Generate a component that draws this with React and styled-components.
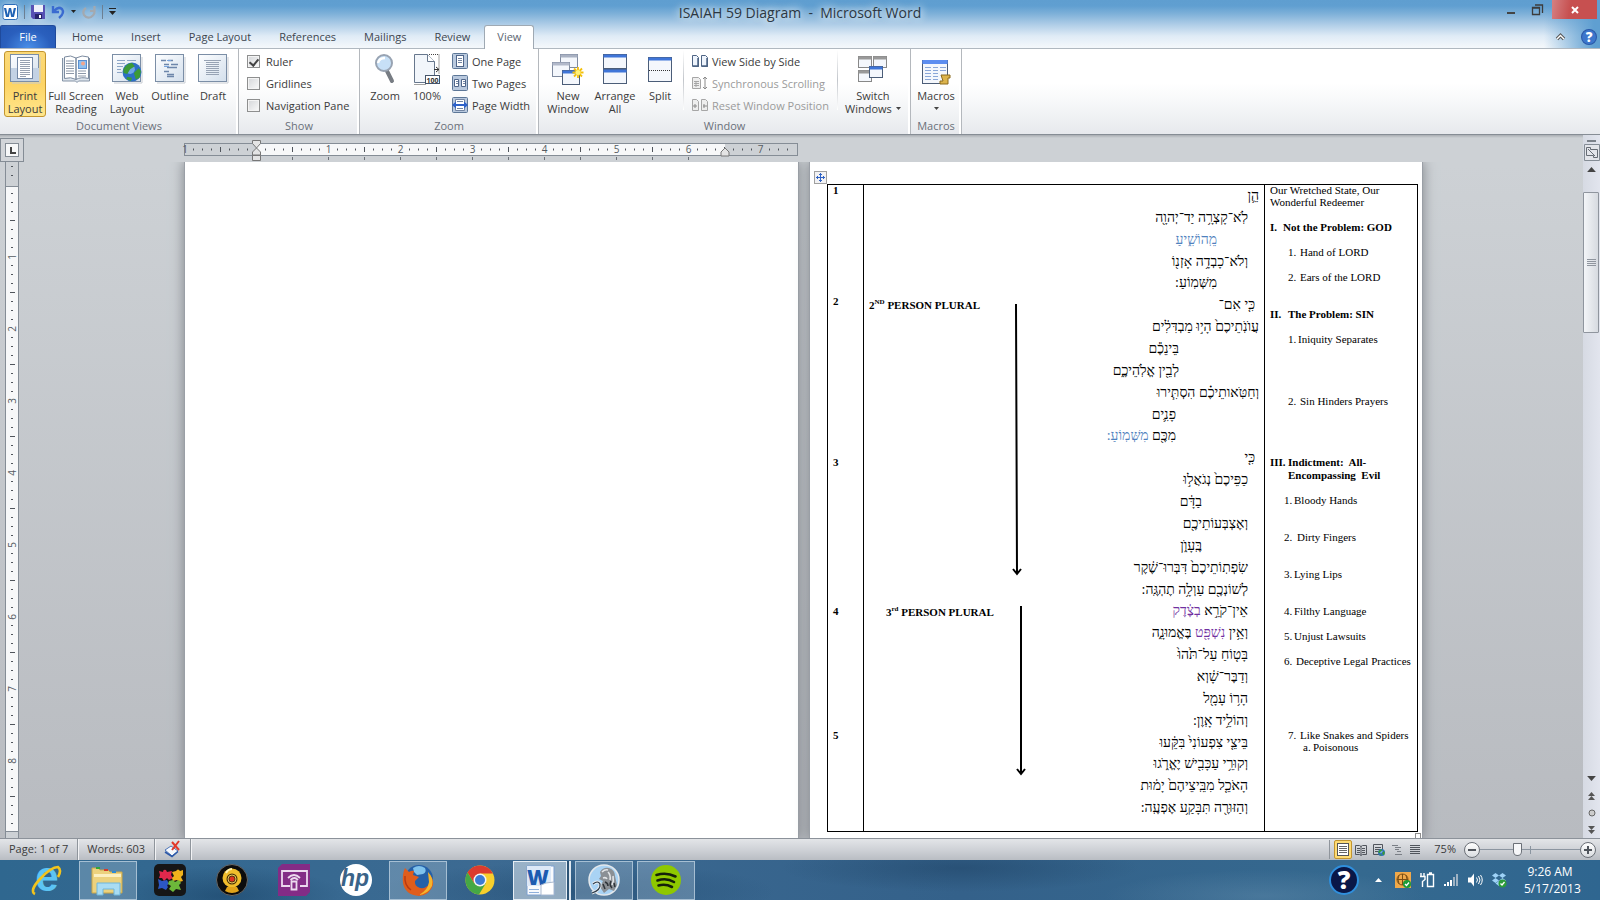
import styled, { createGlobalStyle, css } from 'styled-components';

const GlobalStyle = createGlobalStyle`
  * {
    box-sizing: border-box;
  }
  body {
    margin: 0;
    overflow: hidden;
    font-family: 'Open Sans', 'Noto Sans', sans-serif;
    font-size: 11px;
    color: #3b3b3b;
  }
  button {
    font: inherit;
    color: inherit;
    border: 0;
    padding: 0;
    background: none;
  }
  svg {
    display: block;
    flex: none;
    overflow: visible;
  }
`;

const Window = styled.div`
  height: 100vh;
  display: flex;
  flex-direction: column;
`;

/* ---------- title bar and tabs ---------- */

const Header = styled.header`
  flex: none;
  border-bottom: 1px solid #b0b8c0;
  background:
    linear-gradient(to right, transparent calc(100% - 56px), #5f9fd1 calc(100% - 6px)),
    linear-gradient(#5f9ed0 0, #609fd1 6px, #7fb1d9 14px, #b5d1e9 26px, #dfebf6 36px, #f3f7fb 47px);
`;

const TitleBar = styled.div`
  height: 25px;
  display: grid;
  grid-template-columns: 1fr auto 1fr;
`;

const QuickAccess = styled.div`
  display: flex;
  align-items: center;
  gap: 6px;
  height: 23px;
  padding-left: 2px;
  filter: drop-shadow(0 0 4px rgba(255, 255, 255, 0.6));
`;

const QuickDivider = styled.span`
  width: 1px;
  height: 14px;
  background: #6c7f92;
`;

const Title = styled.h1`
  margin: 0;
  font-size: 14px;
  font-weight: 400;
  line-height: 25px;
  white-space: pre;
  color: #2c3742;
  text-shadow: 0 0 8px #fff, 0 0 10px #e4eff8;
`;

const WindowButtons = styled.div`
  display: flex;
  justify-content: flex-end;
  align-items: flex-start;
  padding-right: 3px;
`;

const WindowButton = styled.button`
  width: ${(p) => (p.$close ? 45 : 26)}px;
  height: 19px;
  display: grid;
  place-items: center;
  ${(p) => p.$close && css`
    margin-left: 2px;
    background: linear-gradient(100deg, #d58082, #c75050 40%);
  `}
`;

const TabRow = styled.nav`
  height: 23px;
  display: flex;
  align-items: stretch;
`;

const Tab = styled.button`
  padding: 0 13px;
  line-height: 22px;
  border: 1px solid transparent;
  border-bottom: 0;
  color: #3d4650;
  ${(p) => p.$file && css`
    width: 56px;
    margin-right: 2px;
    border-color: #1f4a9c;
    border-radius: 2px 3px 0 0;
    color: #fff;
    background: radial-gradient(ellipse at bottom, #4a8fe8, #2a5fbd 60%, #2458b4);
  `}
  ${(p) => p.$active && css`
    height: 24px;
    padding: 0 12px 2px;
    border-color: #9fa9b3;
    border-radius: 3px 3px 0 0;
    color: #5b6570;
    background: #fff;
  `}
`;

const TabTools = styled.div`
  display: flex;
  align-items: center;
  gap: 16px;
  margin-left: auto;
  padding-right: 3px;
`;

/* ---------- ribbon ---------- */

const Ribbon = styled.section`
  flex: none;
  display: flex;
  border-bottom: 1px solid #868d95;
  background: linear-gradient(#fff 40%, #f8f9fa 60%, #e7e9ed);
`;

const Group = styled.div`
  width: ${(p) => p.$w}px;
  height: 85px;
  display: flex;
  flex-direction: column;
  border-right: 1px solid #b4b8bd;
  box-shadow: inset -2px 0 #fff;
`;

const GroupBody = styled.div`
  flex: 1;
  display: flex;
  padding: 1px 0 0 ${(p) => p.$pad || 4}px;
`;

const Caption = styled.div`
  height: 17px;
  line-height: 17px;
  text-align: center;
  color: #6a707a;
`;

const BigButton = styled.button`
  width: ${(p) => p.$w}px;
  height: 66px;
  margin-top: 1px;
  padding-top: 2px;
  display: grid;
  grid-template-rows: 35px;
  grid-auto-rows: 13px;
  align-content: start;
  justify-items: center;
  line-height: 13px;
  white-space: pre;
  border: 1px solid transparent;
  border-radius: 3px;
  ${(p) => p.$on && css`
    border-color: #c2952f;
    background: linear-gradient(#fbd978, #fdd465 50%, #ffe68c);
  `}
`;

const MenuLabel = styled.span`
  display: flex;
  align-items: center;
  gap: 4px;
`;

const Stack = styled.div`
  display: flex;
  flex-direction: column;
  margin-left: ${(p) => p.$gap || 0}px;
`;

const SmallButton = styled.button`
  height: 22px;
  display: flex;
  align-items: center;
  gap: 4px;
  white-space: nowrap;
  color: ${(p) => (p.disabled ? '#9b9b9b' : '#3b3b3b')};
`;

const CheckLabel = styled.label`
  height: 22px;
  display: flex;
  align-items: center;
  gap: 6px;
`;

const CheckBox = styled.input`
  appearance: none;
  width: 13px;
  height: 13px;
  margin: 0;
  display: grid;
  place-items: center;
  border: 1px solid #8e8f8f;
  background: linear-gradient(135deg, #d4d6d9, #fafafa);
  box-shadow: inset 0 0 0 1px #f4f4f4;
  &:checked::after {
    content: '';
    width: 4px;
    height: 7px;
    border: solid #444;
    border-width: 0 2px 2px 0;
    transform: rotate(40deg);
  }
`;

const Divider = styled.span`
  width: 1px;
  height: 60px;
  background: linear-gradient(#fff, #c2c6cb 50%, #fff);
`;

/* ---------- document area ---------- */

const Workspace = styled.main`
  flex: 1;
  min-height: 0;
  display: grid;
  grid-template-columns: 24px 1fr 17px;
  grid-template-rows: 27px 1fr;
  background: linear-gradient(#a9adb2, #cdd1d5 3px, #cdd1d5 30px, #b8bbc0);
`;

const TabSelector = styled.button`
  height: 24px;
  margin-top: 3px;
  display: grid;
  place-items: center;
  border: 1px solid #848c95;
  background: #d2d5d9;
`;

const RulerRow = styled.div`
  display: flex;
  justify-content: center;
`;

const Spread = styled.div`
  width: 1239px;
  flex: none;
`;

const SideRuler = styled.div`
  overflow: hidden;
  padding-left: 5px;
`;

const Canvas = styled.div`
  min-height: 0;
  display: flex;
  justify-content: center;
  gap: 12px;
  overflow: hidden;
`;

const Page = styled.article`
  position: relative;
  flex: none;
  width: ${(p) => p.$w}px;
  padding: 22px 0 0 17px;
  background: #fff;
  box-shadow: 0 0 0 1px #9a9fa6, 0 0 12px 1px #7f8489;
  font-family: 'Liberation Serif', serif;
  color: #000;
`;

const MoveHandle = styled.button`
  position: absolute;
  top: 9px;
  left: 4px;
  width: 13px;
  height: 13px;
  border: 1px solid #a0a0a0;
  background: #f2f2f4;
`;

const DocTable = styled.table`
  width: 590px;
  table-layout: fixed;
  border-collapse: collapse;
  td {
    height: 647px;
    padding: 0;
    border: 1px solid #000;
    vertical-align: top;
  }
`;

/* The outer columns sit on one single-spaced line grid. */
const LineGrid = styled.div`
  height: 644px;
  display: grid;
  grid-template-rows: repeat(52, 1fr);
  padding-left: 5px;
  line-height: 10px;
  white-space: pre;
`;

const Line = styled.div`
  grid-row: ${(p) => p.$row};
  padding-left: ${(p) => p.$indent || 0}px;
  font-weight: ${(p) => (p.$bold ? 700 : 400)};
`;

const Marker = styled.span`
  display: inline-block;
  width: ${(p) => p.$w}px;
`;

const HebrewText = styled.div`
  height: 634px;
  display: grid;
  grid-template-rows: repeat(29, 1fr);
  padding-right: 5px;
  direction: rtl;
  font-size: 14px;
  line-height: 21px;
  white-space: nowrap;
`;

const HebrewLine = styled.div`
  padding-right: ${(p) => p.$indent}px;
`;

const Ink = styled.span`
  color: ${(p) => p.$color};
`;

const FloatingLabel = styled.div`
  position: absolute;
  top: ${(p) => p.$top}px;
  left: ${(p) => p.$left}px;
  line-height: 12px;
  font-weight: 700;
  sup {
    font-size: 7px;
    line-height: 0;
  }
`;

const FloatingArrow = styled.svg`
  position: absolute;
  top: ${(p) => p.$top}px;
  left: ${(p) => p.$left}px;
`;

const EndMark = styled.span`
  position: absolute;
  top: 671px;
  right: 1px;
  width: 6px;
  height: 6px;
  border: 1px solid #8f8f8f;
`;

const ScrollBar = styled.aside`
  grid-column: 3;
  grid-row: 1 / 3;
  display: flex;
  flex-direction: column;
  align-items: stretch;
  padding-top: 5px;
  background: linear-gradient(to right, #d6dae3, #e2e5ee);
  button {
    display: grid;
    place-items: center;
    height: 17px;
  }
`;

const SplitBar = styled.span`
  width: 9px;
  height: 2px;
  margin: 0 auto 2px;
  background: #7b828a;
`;

const ScrollTrack = styled.div`
  flex: 1;
  padding-top: 14px;
`;

const ScrollThumb = styled.div`
  height: 141px;
  margin-right: 1px;
  display: grid;
  place-items: center;
  border: 1px solid #8f959e;
  border-radius: 1px;
  background: linear-gradient(to right, #f3f5f8, #d6dae0);
`;

/* ---------- status bar ---------- */

const StatusBar = styled.footer`
  flex: none;
  height: 22px;
  display: flex;
  align-items: center;
  border-top: 1px solid #8c929a;
  background: linear-gradient(#e3e5e8, #cfd2d7 50%, #b9bdc3);
`;

const StatusItem = styled.button`
  height: 21px;
  padding: 0 9px 2px;
  border-right: 1px solid #8f959c;
  box-shadow: 1px 0 #f2f3f5;
`;

const ViewButtons = styled.div`
  display: flex;
  margin-left: auto;
  padding-left: 4px;
  border-left: 1px solid #8f959c;
`;

const ViewButton = styled.button`
  width: 18px;
  height: 19px;
  display: grid;
  place-items: center;
  border: 1px solid ${(p) => (p.$on ? '#c2952f' : 'transparent')};
  border-radius: 2px;
  background: ${(p) => (p.$on ? '#fedb74' : 'none')};
`;

const ZoomValue = styled.label`
  margin: 0 8px 0 10px;
  padding-bottom: 2px;
`;

const RoundButton = styled.button`
  width: 16px;
  height: 16px;
  display: grid;
  place-items: center;
  border: 1px solid #6b7077;
  border-radius: 50%;
  background: linear-gradient(#fff, #d9dce0);
  &:last-child {
    margin-right: 4px;
  }
`;

const ZoomSlider = styled.input`
  appearance: none;
  width: 100px;
  height: 16px;
  margin: 0;
  background:
    linear-gradient(#8b95a0, #8b95a0) center / 1px 8px no-repeat,
    linear-gradient(#8b95a0, #8b95a0) center / 100% 1px no-repeat;
  &::-webkit-slider-thumb {
    appearance: none;
    width: 9px;
    height: 13px;
    border: 1px solid #6b7077;
    border-radius: 1px 1px 5px 5px;
    background: #f6f7f9;
  }
`;

/* ---------- taskbar ---------- */

const Taskbar = styled.div`
  flex: none;
  height: 40px;
  display: flex;
  align-items: center;
  padding-left: 17px;
  color: #fff;
  background:
    radial-gradient(ellipse 120px 30px at 14% 90%, rgba(20, 60, 96, 0.5), transparent),
    radial-gradient(ellipse 200px 30px at 36% 80%, rgba(20, 60, 96, 0.4), transparent),
    radial-gradient(ellipse 180px 24px at 60% 20%, rgba(24, 58, 90, 0.4), transparent),
    radial-gradient(ellipse 160px 26px at 79% 90%, rgba(110, 150, 180, 0.35), transparent),
    linear-gradient(to right, #2f678f, #3c6a92 30%, #34618a 60%, #35698f 85%, #2f6690);
`;

const TaskButton = styled.button`
  width: 58px;
  height: 39px;
  margin-right: 4px;
  display: grid;
  place-items: center;
  border: 1px solid transparent;
  ${(p) => p.$open && css`
    border-color: rgba(190, 210, 226, 0.75);
    background: rgba(190, 210, 226, 0.3);
  `}
  ${(p) => p.$active && css`
    width: 54px;
    margin-right: 8px;
    border-color: #e6eef5;
    background: rgba(215, 226, 236, 0.6);
    box-shadow: 2px 0 #2c5375, 4px 0 #dfe8f0;
  `}
`;

const Tray = styled.div`
  display: flex;
  align-items: center;
  gap: 8px;
  margin-left: auto;
  padding-right: 24px;
`;

const TrayToggle = styled.button`
  margin: 0 5px 0 8px;
`;

const Clock = styled.time`
  margin-left: 9px;
  width: 52px;
  font-size: 12px;
  line-height: 17px;
  text-align: center;
  white-space: nowrap;
`;

/* ---------- drawings ---------- */

const Caret = ({ up, w = 7, h = 4, color = '#444' }) => (
  <svg width={w} height={h} viewBox="0 0 7 4"><path d={up ? 'M0 4h7L3.5 0z' : 'M0 0h7L3.5 4z'} fill={color} /></svg>
);

const Icon = ({ w = 30, h = w, children, ...rest }) => (
  <svg width={w} height={h} viewBox={`0 0 ${w} ${h}`} fill="none" {...rest}>{children}</svg>
);

const FrameIcon = ({ children }) => (
  <Icon h={29}>
    <defs>
      <linearGradient id="frame" x1="0" y1="0" x2="1" y2="1">
        <stop stopColor="#fdfeff" /><stop offset="1" stopColor="#d3dfec" />
      </linearGradient>
    </defs>
    <path d="M2 29h28V3" stroke="#c8ccd2" />
    <rect x=".5" y=".5" width="28" height="27" fill="url(#frame)" stroke="#7b8ea6" />
    {children}
  </Icon>
);

const PrintIcon = () => (
  <FrameIcon>
    <path d="M1 14h28v13H1z" fill="#c3d2e4" />
    <rect x="7.500" y="3.500" width="15" height="21" fill="#fff" stroke="#7388a5" />
    <path d="M10 6.500h10M10 8.500h10M10 10.500h10M10 12.500h10M10 14.500h10M10 16.500h10M10 18.500h10M10 20.500h10M10 22.500h6" stroke="#97a1b0" />
  </FrameIcon>
);

const ReadingIcon = () => (
  <Icon h={29}>
    <path d="M1.500 4v23h13l1.500 1.500 1.500-1.500h11V4" fill="#dfe6ee" stroke="#8392a5" />
    <path d="M3.500 3Q10 .5 15 4v21.500q-5-3-11.500-1zM27.500 3Q21 .5 15 4v21.500q5-3 12.500-1z" fill="#fff" stroke="#7c8b9f" />
    <path d="M5 7h8M5 9.500h8M5 12h8M5 14.500h8M5 17h8M5 19.500h8M17 17h8M17 19.500h8M17 22h8" stroke="#8d98a8" />
    <rect x="17.500" y="6.500" width="8" height="8" fill="#8fc0f0" stroke="#5a8fd0" /><circle cx="22" cy="9.500" r="2" fill="#f2a58c" />
  </Icon>
);

const Globe = ({ x, y, r }) => (
  <g transform={`translate(${x} ${y}) scale(${r / 10})`}>
    <circle r="10" fill="#2c6fc6" /><circle cx="-2" cy="-3" r="5" fill="#8cc1f3" opacity=".7" />
    <path d="M-9-3Q-6-9 0-9.500L3-6-2-3-5 2-9 1zM2 1l5-5 2.500 3L8 6 4 8zM-5 5l5 1-1 3.500-5-2z" fill="#3c9a37" />
  </g>
);

const WebIcon = () => (
  <FrameIcon>
    <path d="M5 6.500h8M5 9.500h8M5 12.500h6M5 15.500h4M5 18.500h5M15 6.500h9" stroke="#8ba5c6" />
    <Globe x={20} y={18} r={9.500} />
  </FrameIcon>
);

const OutlineIcon = () => (
  <FrameIcon>
    <path d="M6 6.500h5M13 6.500h5M9 10.500h5M16 10.500h7M12 13.500h10M9 17.500h5M12 20.500h7M12 22.500h7" stroke="#6d86aa" strokeWidth="1.300" />
    <path d="M9 12.500h5M16 6.500h-4" stroke="#78a5de" />
  </FrameIcon>
);

const DraftIcon = () => (
  <FrameIcon>
    <path d="M6 6.500h17M8 8.500h13M8 10.500h13M8 12.500h13M8 14.500h13M8 16.500h13M8 18.500h13M8 20.500h13" stroke="#97a3b4" />
  </FrameIcon>
);

const ZoomIcon = () => (
  <Icon w={24} h={30}>
    <path d="M14 17l5 10" stroke="#777c83" strokeWidth="4" strokeLinecap="round" />
    <circle cx="11" cy="9" r="8" fill="#c7e0f7" stroke="#98a3b2" strokeWidth="2" />
    <path d="M5 9q1-5 7-5" stroke="#fff" strokeWidth="2.500" />
  </Icon>
);

const HundredIcon = () => (
  <Icon w={26} h={31}>
    <path d="M.5.5h13l7 7v21H.5z" fill="#f2f6fb" stroke="#67778d" /><path d="M13.500.5v7h7" fill="#fff" stroke="#67778d" />
    <path d="M15 .5h10v20M.5 30.500h12" stroke="#444" strokeDasharray="1 1" />
    <path d="M20 15.500h5M22 13l3 2.500-3 2.500" stroke="#333" />
    <rect x="11.500" y="21.500" width="14" height="8" fill="#fff" stroke="#44546a" />
    <text x="18.500" y="28.500" fontSize="7" fontWeight="700" textAnchor="middle" fill="#333">100</text>
  </Icon>
);

const Pane = ({ x, y, w, h, c = '#3f75d8', s = '#4b5d78' }) => (
  <g>
    <rect x={x + 0.5} y={y + 0.5} width={w - 1} height={h - 1} fill="#f4f7fc" stroke={s} />
    <path d={`M${x + 0.5} ${y + 2}h${w - 1}`} stroke={c} strokeWidth="3" />
  </g>
);

const NewWindowIcon = () => (
  <Icon w={32} h={31}>
    <Pane x={8} y={0} w={18} h={14} c="#a9b1c2" s="#7f8a9f" /><Pane x={0} y={8} w={18} h={15} c="#b2b9ca" s="#7f8a9f" /><Pane x={10} y={16} w={18} h={15} />
    <path d="M26 13v11M20.500 18.500h11M22 14.500l8 8M30 14.500l-8 8" stroke="#f3c00d" strokeWidth="1.800" /><circle cx="26" cy="18.500" r="2.500" fill="#fff27a" />
  </Icon>
);

const ArrangeIcon = () => (
  <Icon w={24} h={30}><Pane x={0} y={0} w={24} h={15} /><Pane x={0} y={15} w={24} h={15} /></Icon>
);

const SplitIcon = () => (
  <Icon w={24} h={30}><Pane x={0} y={3} w={24} h={25} /><path d="M1 16.500h22" stroke="#333" strokeDasharray="1 1" /></Icon>
);

const SwitchIcon = () => (
  <Icon h={30}>
    <Pane x={0} y={2} w={14} h={12} c="#999" s="#888" /><Pane x={15} y={2} w={14} h={12} c="#999" s="#888" />
    <Pane x={0} y={16} w={14} h={12} c="#999" s="#888" /><Pane x={11} y={12} w={14} h={12} />
  </Icon>
);

const MacrosIcon = () => (
  <Icon w={30} h={31}>
    <Pane x={1} y={6} w={26} h={24} /><path d="M1.500 8h25" stroke="#5c8df0" strokeWidth="4" />
    <path d="M4 13.500h6M12 13.500h5M19 13.500h6M4 16.500h6M12 16.500h5M19 16.500h6M4 19.500h6M12 19.500h5M4 22.500h6M12 22.500h5M4 25.500h6M12 25.500h5" stroke="#8aa7d8" />
    <path d="M20 21h9v3h-2v6h-8v-3h3z" fill="#dcb44c" stroke="#8c6a1d" />
  </Icon>
);

const PageSizeIcon = ({ kind }) => (
  <Icon w={16}>
    <rect x=".5" y=".5" width="15" height="15" rx="1" fill="#b9c9de" stroke="#5d7797" />
    {kind === 'one' && <g><rect x="4.500" y="2.500" width="7" height="11" fill="#fff" stroke="#50668a" /><path d="M6 5.500h4M6 7.500h4M6 9.500h4" stroke="#7385a2" /></g>}
    {kind === 'two' && <g><path d="M2.500 4.500h4v7h-4zM9.500 4.500h4v7h-4z" fill="#fff" stroke="#50668a" /><path d="M4 6.500h2M4 8.500h2M11 6.500h2M11 8.500h2" stroke="#7385a2" /></g>}
    {kind === 'width' && <g><path d="M3.500 2.500h9v11h-9zM5 4.500h6M5 11.500h6" fill="#fff" stroke="#7385a2" /><path d="M4 8h8" stroke="#2e62c9" strokeWidth="2" /><path d="M0 8l4-3.500v7zM16 8l-4-3.500v7z" fill="#2e62c9" /></g>}
  </Icon>
);

const SideIcon = ({ kind }) => {
  const s = kind === 'side' ? '#4e6484' : '#a6a6a6';
  return (
    <Icon w={16} h={14}>
      {kind !== 'sync' && <path d="M.5 1.500h4l2 2v9h-6zM9.500 1.500h4l2 2v9h-6z" fill={kind === 'side' ? '#eef4fc' : '#eee'} stroke={s} />}
      {kind === 'side' && <path d="M6 4v8M15 4v8M1 12h6M10 12h6" stroke={s} strokeWidth="1.500" />}
      {kind === 'reset' && <path d="M1 8h4M3 6v4M11 8h4M12 6v4" stroke="#8a8a8a" />}
      {kind === 'sync' && <g><path d="M.5 1.500h6l2 2v9h-8z" fill="#eee" stroke={s} /><path d="M2 5.500h5M2 7.500h5M2 9.500h5M4 5v6" stroke={s} /><path d="M13 1v12M11 3l2-2 2 2M11 11l2 2 2-2" stroke="#8a8a8a" /></g>}
    </Icon>
  );
};

const WordBadge = () => (
  <Icon w={16}>
    <rect x="1" y=".5" width="14.500" height="15" rx="2" fill="#fff" stroke="#2c6cb8" />
    <text x="8" y="13" fontSize="12" fontWeight="800" textAnchor="middle" fill="#1f62b4">W</text>
  </Icon>
);

const SaveIcon = () => (
  <Icon w={14}><path d="M0 0h14v14H2l-2-2z" fill="#5650b4" /><path d="M3 0h9v7H3z" fill="#eef0fa" /><path d="M4 9h7v5H4z" fill="#26246b" /><path d="M8 10h2v3H8z" fill="#fff" /></Icon>
);

const UndoIcon = () => (
  <Icon w={14}><path d="M2 1v6h6M3 6q4-5 8-2 3 4-3 9" stroke="#3a6bd0" strokeWidth="2.400" /></Icon>
);

const RedoIcon = () => (
  <Icon w={14}><path d="M4 3Q0 6 2 10q3 4 7 2 5-3 3-8M12.500 1v5H8" stroke="#a3a9b0" strokeWidth="2.200" /></Icon>
);

const Lines = ({ d, w = 12, h = 12, color = '#50555c' }) => (
  <Icon w={w} h={h}><path d={d} stroke={color} /></Icon>
);

const inch = 72;
const eighth = 9;

const TopRuler = () => (
  <svg width="614" height="27">
    <rect x=".5" y="8.500" width="613" height="12" fill="#cdd1d5" stroke="#858d96" />
    <rect x="72" y="9" width="469" height="11" fill="#f7f8f9" />
    {Array.from({ length: 67 }, (_, i) => i + 1).map((i) => {
      const x = i * eighth + 0.5;
      if (i % 8 === 0) {
        const n = Math.abs(i / 8 - 1);
        return n ? <text key={i} x={x} y="18" fontSize="10" textAnchor="middle" fill="#555b62">{n}</text> : null;
      }
      return <path key={i} d={`M${x} ${i % 4 ? 13.5 : 12}v${i % 4 ? 2 : 5}`} stroke="#50555c" />;
    })}
    <text x="1" y="18" fontSize="10" textAnchor="middle" fill="#555b62">1</text>
    {Array.from({ length: 12 }, (_, i) => (
      <path key={i} d={`M${inch * 1.5 + i * 36 + 0.5} 22v3`} stroke="#6b7077" />
    ))}
    <path d="M68.500 5.500h8v3l-4 4.500-4-4.500zM72.500 13l4 4v3h-8v-3zM68.500 20.500h8v5h-8z" fill="#e4e4e4" stroke="#777" />
    <path d="M541 13l4 4v4h-8v-4z" fill="#e4e4e4" stroke="#777" />
  </svg>
);

const LeftRuler = () => (
  <svg width="14" height="676">
    <rect x=".5" y="-1" width="13" height="678" fill="#cdd1d5" stroke="#858d96" />
    <rect x="1" y="25" width="12" height="645" fill="#f7f8f9" />
    <path d="M0 24.500h14M0 669.500h14" stroke="#858d96" />
    {Array.from({ length: 74 }, (_, i) => i).map((i) => {
      const y = 5 + i * eighth;
      const pos = i - 2;
      if (pos === 0) return null;
      if (pos > 0 && pos % 8 === 0) {
        return <text key={i} x="0" y="0" fontSize="10" textAnchor="middle" fill="#555b62" transform={`translate(11 ${y}) rotate(-90)`}>{pos / 8}</text>;
      }
      return pos % 4 ? <path key={i} d={`M6 ${y - 0.5}h2`} stroke="#50555c" /> : <path key={i} d={`M5 ${y - 0.5}h5`} stroke="#50555c" />;
    })}
  </svg>
);

const IEIcon = () => (
  <Icon w={32}>
    <text x="17" y="27" fontSize="42" fontWeight="700" textAnchor="middle" fill="#5cc4f4" fontFamily="Liberation Sans, sans-serif">e</text>
    <path d="M5 30q-6-3 5-15T28 3q4 3 0 10" stroke="#f3c41c" strokeWidth="2.600" />
  </Icon>
);

const FolderIcon = () => (
  <Icon w={34} h={30}>
    <path d="M1 28V3h6l2 2h8l2 2h12v21z" fill="#ecd27e" stroke="#c9a648" />
    <path d="M3 9h27v3H3z" fill="#fbf0c2" /><path d="M5 2h4v2H5z" fill="#2fa53c" /><path d="M13 4h4v2h-4z" fill="#d33b2c" /><path d="M21 6h4v2h-4z" fill="#2b8bd6" />
    <path d="M6 30V18h23v12h-6v-6H12v6z" fill="#a9dcf3" stroke="#6fb6dc" />
  </Icon>
);

const PuzzleIcon = () => (
  <Icon w={32}>
    <rect width="32" height="32" rx="5" fill="#161616" />
    <path d="M5 7l4 1q0-3 3-2l1 2 5-1-1 4 2 3-4 2-2-2-3 3-2-3-3 0 1-3z" fill="#e0284c" /><path d="M18 8l4-1q2-3 4 0l3-1v5l-2 2 2 4-4 1-2-2-4 1-1-3 2-2z" fill="#f0b31c" />
    <path d="M4 15l4 2 5-1 2 4q-3 1-1 3l-2 3-4-2-4 1 1-4z" fill="#2c57c4" /><path d="M15 17l4-1 2 2 4-2 2 3-2 2 2 5-5-1-3 3-4-3 2-3-3-2z" fill="#6cb83a" />
  </Icon>
);

const CameraIcon = () => (
  <Icon w={32}>
    <circle cx="16" cy="16" r="15.500" fill="#0c0c0c" stroke="#666" /><circle cx="16" cy="14" r="9.500" fill="#f0bd2c" />
    <path d="M11 23h10l2 4q-7 4-14 0z" fill="#e0a31a" /><circle cx="16" cy="15" r="5.500" fill="#4a3408" /><circle cx="16" cy="15" r="4" stroke="#e7c45c" /><circle cx="16" cy="15" r="2.500" fill="#e03020" />
    <path d="M10 9q2-4 6-4" stroke="#fff1b0" strokeWidth="2" />
  </Icon>
);

const CastIcon = () => (
  <Icon w={32}>
    <path d="M4 0h28v28l-4 4H0V4z" fill="#832c86" />
    <path d="M12 22H4V7h25v15h-7M10 14q6-6 12 0M12.500 16q4-4 7.500 0M13.500 17.500h5v8h-5z" stroke="#ecd9ee" strokeWidth="1.800" />
  </Icon>
);

const HpIcon = () => (
  <Icon w={32}>
    <circle cx="16" cy="16" r="16" fill="#fff" />
    <text x="15" y="22" fontSize="23" fontWeight="700" fontStyle="italic" textAnchor="middle" fill="#3a6388" fontFamily="Liberation Sans Narrow, Liberation Sans, sans-serif">hp</text>
  </Icon>
);

const FirefoxIcon = () => (
  <Icon w={32}>
    <circle cx="17" cy="15" r="14" fill="#2560a8" /><path d="M11 4q6-4 12 0 2 4-2 6l-6 1-3-3z" fill="#7fc2ec" />
    <path d="M3 4l4 4q3-2 5-1l-1 4 6 2-4 4q-1 5 5 7 6 1 9-4 2-6 0-10 5 5 4 11-3 10-14 11Q3 31 1 19 0 10 3 4z" fill="#df5d1c" />
    <path d="M26 8q6 6 4 14-4 8-13 9 9-5 10-13z" fill="#f6b52c" /><path d="M3 12q-1 9 6 14" stroke="#b93a12" strokeWidth="1.500" />
  </Icon>
);

const ChromeIcon = () => (
  <Icon w={30}>
    <circle cx="15" cy="15" r="14.500" fill="#f7cf2c" />
    <path d="M2.500 7.500a14.500 14.500 0 0 1 25.500 1H15L9 18z" fill="#dc3b2e" /><path d="M2.500 7.500a14.500 14.500 0 0 0 11.500 22L21 18l-6 3-6-3z" fill="#45a845" />
    <circle cx="15" cy="15" r="6.500" fill="#f4f4f4" /><circle cx="15" cy="15" r="5" fill="#3c7bd4" />
  </Icon>
);

const WordIcon = () => (
  <Icon w={30} h={31}>
    <path d="M2 1h27v29H2z" fill="#f8fafd" stroke="#7da0d0" /><path d="M2 1h24v20H2z" fill="#dce8f7" />
    <text x="13" y="20" fontSize="21" fontWeight="800" textAnchor="middle" fill="#1c5bb0">W</text>
    <path d="M16 20l5-2 8-1v13H16z" fill="#fff" stroke="#a9b9cf" /><path d="M4 24.500h10M4 27.500h10" stroke="#8fb0dc" />
  </Icon>
);

const PortraitIcon = () => (
  <Icon w={32}>
    <circle cx="16" cy="16" r="15" fill="#a9d3f4" stroke="#e3e8ec" strokeWidth="1.500" />
    <path d="M12 8q3-5 9-4 6 2 6 8l2 9-3 6-5-2-5 4-4-6 3-6-4-2 2-3z" fill="#8b9095" />
    <path d="M14 8q3-3 6-2M20 8q3 3 2 8M15 14q3-1 4 1M25 12q1 5-1 9" stroke="#e3e5e7" strokeWidth="1.600" />
    <path d="M17 18q3 1 3 4M23 17q-2 4 1 7M15 20l2 5M26 19l1 4" stroke="#2f3439" strokeWidth="1.500" />
    <path d="M5 20q5-4 7 0 1 6-8 9" stroke="#e9edf0" strokeWidth="3" /><path d="M5 20q5-4 7 0 1 6-8 9" stroke="#2c3b4a" strokeWidth="1.200" />
  </Icon>
);

const SpotifyIcon = () => (
  <Icon w={30}>
    <circle cx="15" cy="15" r="15" fill="#8fc800" />
    <path d="M5.500 10q10-3 19 1.500M6.500 15.500q9-3 16.500 1.500M7.500 20.500q7-2 13.500 1.500" stroke="#15200a" strokeWidth="2.600" strokeLinecap="round" />
  </Icon>
);

const HelpBall = ({ size }) => (
  <Icon w={size} viewBox="0 0 30 30">
    <circle cx="15" cy="15" r="14" fill={size > 20 ? '#0a1747' : '#3c76cc'} stroke={size > 20 ? '#2f8fdd' : '#2a58a8'} strokeWidth="2" />
    <text x="15" y="24" fontSize="25" fontWeight="800" textAnchor="middle" fill="#fff">?</text>
  </Icon>
);

/* ---------- document content ---------- */

const blue = '#4f81bd';
const purple = '#7030a0';

// indent from the right margin, text
const hebrew = [
  [0, 'הֵ֛ן'],
  [11, 'לֹֽא־קָצְרָ֥ה יַד־יְהוָ֖ה'],
  [42, <Ink $color={blue}>מֵֽהוֹשִׁ֑יעַ</Ink>],
  [11, 'וְלֹא־כָבְדָ֥ה אָזְנ֖וֹ'],
  [42, 'מִשְּׁמֽוֹעַ:'],
  [4, 'כִּ֤י אִם־'],
  [0, 'עֲוֺנֹֽתֵיכֶם֙ הָי֣וּ מַבְדִּלִ֔ים'],
  [80, 'בֵּינֵכֶ֕ם'],
  [80, 'לְבֵ֖ין אֱלֹֽהֵיכֶ֑ם'],
  [0, 'וְחַטֹּֽאותֵיכֶ֗ם הִסְתִּ֧ירוּ'],
  [83, 'פָנִ֛ים'],
  [83, <>מִכֶּ֖ם <Ink $color={blue}>מִשְּׁמֽוֹעַ:</Ink></>],
  [4, 'כִּ֤י'],
  [11, 'כַפֵּיכֶם֙ נְגֹאֲל֣וּ'],
  [57, 'בַדָּ֔ם'],
  [11, 'וְאֶצְבְּעוֹתֵיכֶ֖ם'],
  [57, 'בֶּֽעָוֺ֑ן'],
  [11, 'שִׂפְתֽוֹתֵיכֶם֙ דִּבְּרוּ־שֶׁ֔קֶר'],
  [11, 'לְשׁוֹנְכֶ֖ם עַוְלָ֥ה תֶהְגֶּֽה:'],
  [11, <>אֵין־קֹרֵ֣א <Ink $color={purple}>בְצֶ֔דֶק</Ink></>],
  [11, <>וְאֵ֥ין <Ink $color={purple}>נִשְׁפָּ֖ט</Ink> בֶּאֱמוּנָ֑ה</>],
  [11, 'בָּט֤וֹחַ עַל־תֹּ֙הוּ֙'],
  [11, 'וְדַבֶּר־שָׁ֔וְא'],
  [11, 'הָר֥וֹ עָמָ֖ל'],
  [11, 'וְהוֹלֵ֥יד אָֽוֶן:'],
  [11, 'בֵּיצֵ֤י צִפְעוֹנִי֙ בִּקֵּ֔עוּ'],
  [11, 'וְקוּרֵ֥י עַכָּבִ֖ישׁ יֶאֱרֹ֑גוּ'],
  [11, 'הָאֹכֵ֤ל מִבֵּֽיצֵיהֶם֙ יָמ֔וּת'],
  [11, 'וְהַזּוּרֶ֖ה תִּבָּקַ֥ע אֶפְעֶֽה:'],
];

const verses = [[1, '1'], [10, '2'], [23, '3'], [35, '4'], [45, '5']];

// row, indent, marker, marker width, text, bold
const notes = [
  [1, 0, '', 0, 'Our Wretched State, Our'],
  [2, 0, '', 0, 'Wonderful Redeemer'],
  [4, 0, 'I.', 13, 'Not the Problem: GOD', true],
  [6, 18, '1.', 12, 'Hand of LORD'],
  [8, 18, '2.', 12, 'Ears of the LORD'],
  [11, 0, 'II.', 18, 'The Problem: SIN', true],
  [13, 18, '1.', 10, 'Iniquity Separates'],
  [18, 18, '2.', 12, 'Sin Hinders Prayers'],
  [23, 0, 'III.', 18, 'Indictment:  All-', true],
  [24, 18, '', 0, 'Encompassing  Evil', true],
  [26, 14, '1.', 10, 'Bloody Hands'],
  [29, 14, '2.', 13, 'Dirty Fingers'],
  [32, 14, '3.', 10, 'Lying Lips'],
  [35, 14, '4.', 10, 'Filthy Language'],
  [37, 14, '5.', 10, 'Unjust Lawsuits'],
  [39, 14, '6.', 12, 'Deceptive Legal Practices'],
  [45, 18, '7.', 12, 'Like Snakes and Spiders'],
  [46, 33, 'a.', 10, 'Poisonous'],
];

const tabs = ['Home', 'Insert', 'Page Layout', 'References', 'Mailings', 'Review'];

const Chrome = () => (
  <Header>
    <TitleBar>
      <QuickAccess>
        <WordBadge />
        <QuickDivider />
        <button aria-label="Save"><SaveIcon /></button>
        <button aria-label="Undo"><UndoIcon /></button>
        <Caret w={5} h={3} color="#222" />
        <button aria-label="Redo"><RedoIcon /></button>
        <QuickDivider />
        <button aria-label="Customize"><Icon w={7} h={7}><path d="M0 .5h7" stroke="#222" /><path d="M0 3h7L3.500 7z" fill="#222" /></Icon></button>
      </QuickAccess>
      <Title>{'ISAIAH 59 Diagram  -  Microsoft Word'}</Title>
      <WindowButtons>
        <WindowButton aria-label="Minimize"><Lines d="M2 8.500h8M2 9.500h8" color="#444" /></WindowButton>
        <WindowButton aria-label="Restore"><Icon w={11} h={11}><path d="M.5 3.500h7v7h-7zM.5 4h7M3 1h7.500v8" stroke="#3c3c3c" strokeWidth="1.300" /></Icon></WindowButton>
        <WindowButton aria-label="Close" $close><Icon w={8}><path d="M1 1l6 6M7 1L1 7" stroke="#fff" strokeWidth="2" /></Icon></WindowButton>
      </WindowButtons>
    </TitleBar>
    <TabRow>
      <Tab $file>File</Tab>
      {tabs.map((t) => <Tab key={t}>{t}</Tab>)}
      <Tab $active>View</Tab>
      <TabTools>
        <button aria-label="Minimize ribbon"><Icon w={9} h={8}><path d="M1 6l3.500-3.500L8 6" stroke="#555" strokeWidth="3.400" /><path d="M1 6l3.500-3.500L8 6" stroke="#fff" strokeWidth="1.400" /></Icon></button>
        <button aria-label="Help"><HelpBall size={16} /></button>
      </TabTools>
    </TabRow>
  </Header>
);

const ViewRibbon = () => (
  <Ribbon>
    <Group $w={239}>
      <GroupBody>
        <BigButton $w={42} $on><PrintIcon />{'Print\nLayout'}</BigButton>
        <BigButton $w={60}><ReadingIcon />{'Full Screen\nReading'}</BigButton>
        <BigButton $w={42}><WebIcon />{'Web\nLayout'}</BigButton>
        <BigButton $w={44}><OutlineIcon />Outline</BigButton>
        <BigButton $w={42}><DraftIcon />Draft</BigButton>
      </GroupBody>
      <Caption>Document Views</Caption>
    </Group>
    <Group $w={121}>
      <GroupBody $pad={8}>
        <Stack>
          <CheckLabel><CheckBox type="checkbox" defaultChecked />Ruler</CheckLabel>
          <CheckLabel><CheckBox type="checkbox" />Gridlines</CheckLabel>
          <CheckLabel><CheckBox type="checkbox" />Navigation Pane</CheckLabel>
        </Stack>
      </GroupBody>
      <Caption>Show</Caption>
    </Group>
    <Group $w={179}>
      <GroupBody>
        <BigButton $w={42}><ZoomIcon />Zoom</BigButton>
        <BigButton $w={42}><HundredIcon />100%</BigButton>
        <Stack $gap={4}>
          <SmallButton><PageSizeIcon kind="one" />One Page</SmallButton>
          <SmallButton><PageSizeIcon kind="two" />Two Pages</SmallButton>
          <SmallButton><PageSizeIcon kind="width" />Page Width</SmallButton>
        </Stack>
      </GroupBody>
      <Caption>Zoom</Caption>
    </Group>
    <Group $w={372}>
      <GroupBody>
        <BigButton $w={50}><NewWindowIcon />{'New\nWindow'}</BigButton>
        <BigButton $w={44}><ArrangeIcon />{'Arrange\nAll'}</BigButton>
        <BigButton $w={46}><SplitIcon />Split</BigButton>
        <Divider />
        <Stack $gap={8}>
          <SmallButton><SideIcon kind="side" />View Side by Side</SmallButton>
          <SmallButton disabled><SideIcon kind="sync" />Synchronous Scrolling</SmallButton>
          <SmallButton disabled><SideIcon kind="reset" />Reset Window Position</SmallButton>
        </Stack>
        <Stack $gap={8}><Divider /></Stack>
        <BigButton $w={70}><SwitchIcon />Switch<MenuLabel>Windows<Caret w={5} h={3} /></MenuLabel></BigButton>
      </GroupBody>
      <Caption>Window</Caption>
    </Group>
    <Group $w={51}>
      <GroupBody $pad={1}>
        <BigButton $w={48}><MacrosIcon />Macros<MenuLabel><Caret w={5} h={3} /></MenuLabel></BigButton>
      </GroupBody>
      <Caption>Macros</Caption>
    </Group>
  </Ribbon>
);

const Document = () => (
  <Canvas>
    <Page $w={613} />
    <Page $w={612}>
      <MoveHandle aria-label="Move table">
        <Icon w={11}><path d="M5.500 1v9M1 5.500h9M4 2.500h3M4 8.500h3M2.500 4v3M8.500 4v3" stroke="#2f62c4" /></Icon>
      </MoveHandle>
      <DocTable>
        <colgroup>
          <col width="36" />
          <col width="401" />
          <col width="153" />
        </colgroup>
        <tbody>
          <tr>
            <td>
              <LineGrid>
                {verses.map(([row, n]) => <Line key={n} $row={row} $bold>{n}</Line>)}
              </LineGrid>
            </td>
            <td>
              <HebrewText lang="he">
                {hebrew.map(([indent, text], i) => <HebrewLine key={i} $indent={indent}>{text}</HebrewLine>)}
              </HebrewText>
            </td>
            <td>
              <LineGrid>
                {notes.map(([row, indent, mark, w, text, bold]) => (
                  <Line key={row} $row={row} $indent={indent} $bold={bold}>
                    {mark && <Marker $w={w}>{mark}</Marker>}{text}
                  </Line>
                ))}
              </LineGrid>
            </td>
          </tr>
        </tbody>
      </DocTable>
      <FloatingLabel $top={137} $left={59}>2<sup>ND</sup> PERSON PLURAL</FloatingLabel>
      <FloatingLabel $top={444} $left={76}>3<sup>rd</sup> PERSON PLURAL</FloatingLabel>
      <FloatingArrow $top={142} $left={201} width="12" height="272" fill="none" stroke="#000" strokeWidth="2">
        <path d="M5 0l1 270M2 265l4 5 4-5" />
      </FloatingArrow>
      <FloatingArrow $top={444} $left={205} width="12" height="170" fill="none" stroke="#000" strokeWidth="2">
        <path d="M6 0v168M2 163l4 5 4-5" />
      </FloatingArrow>
      <EndMark />
    </Page>
  </Canvas>
);

export default function App() {
  return (
    <Window>
      <GlobalStyle />
      <Chrome />
      <ViewRibbon />
      <Workspace>
        <TabSelector aria-label="Tab stop">
          <Icon w={14}><rect x=".5" y=".5" width="13" height="13" fill="#f7f8f9" stroke="#848c95" /><path d="M6 4v6h5" stroke="#444" strokeWidth="2" /></Icon>
        </TabSelector>
        <RulerRow><Spread><TopRuler /></Spread></RulerRow>
        <ScrollBar>
          <SplitBar />
          <button aria-label="View ruler"><Icon w={16} h={17}><path d="M.5.5h15v16H.5z" stroke="#848c95" fill="#e3e5ea" /><path d="M2.500 3.500h4v2h7v8h-4v-2h-7zM4 5l4 4M7 8l4 4" stroke="#666c74" /></Icon></button>
          <button aria-label="Scroll up"><Caret up w={9} h={5} /></button>
          <ScrollTrack><ScrollThumb><Lines d="M0 .5h9M0 2.500h9M0 4.500h9M0 6.500h9" w={9} h={7} color="#8f959e" /></ScrollThumb></ScrollTrack>
          <button aria-label="Scroll down"><Caret w={9} h={5} /></button>
          <button aria-label="Previous page"><Icon w={7} h={8}><path d="M0 4h7L3.500 0zM0 8h7L3.500 4z" fill="#555" /></Icon></button>
          <button aria-label="Browse object"><Icon w={8}><circle cx="4" cy="4" r="3" stroke="#666" fill="#ccc" /></Icon></button>
          <button aria-label="Next page"><Icon w={7} h={8}><path d="M0 0h7L3.500 4zM0 4h7L3.500 8z" fill="#555" /></Icon></button>
        </ScrollBar>
        <SideRuler><LeftRuler /></SideRuler>
        <Document />
      </Workspace>
      <StatusBar>
        <StatusItem>Page: 1 of 7</StatusItem>
        <StatusItem>Words: 603</StatusItem>
        <StatusItem aria-label="Proofing errors">
          <Icon w={17} h={16}><path d="M1 9l6-4 7 5-6 5z" fill="#f5f8fc" stroke="#4b74b8" /><path d="M1 11l7 4.500 6-5" stroke="#2c58a8" strokeWidth="1.500" /><path d="M8 1l7 8M15 0L8 9" stroke="#e2382a" strokeWidth="2" /></Icon>
        </StatusItem>
        <ViewButtons>
          <ViewButton $on aria-label="Print layout"><Icon w={12} h={13}><rect x=".5" y=".5" width="11" height="12" fill="#fff" stroke="#555" /><path d="M2 3.500h8M2 5.500h8M2 7.500h8M2 9.500h8" stroke="#666" /></Icon></ViewButton>
          <ViewButton aria-label="Full screen reading"><Lines d="M.5 1.500h4l1.500 1 1.500-1h4v9h-4l-1.500 1-1.500-1h-4zM6 2v9M2 4.500h3M2 6.500h3M2 8.500h3M7 4.500h3M7 6.500h3M7 8.500h3" /></ViewButton>
          <ViewButton aria-label="Web layout"><Icon w={12} h={12}><path d="M.5.5h9v10h-9zM2 3.500h6M2 5.500h6M2 7.500h3" stroke="#50555c" /><Globe x={8.500} y={8.500} r={3.500} /></Icon></ViewButton>
          <ViewButton aria-label="Outline"><Lines d="M1 1.500h6M4 3.500h6M4 5.500h4M6 7.500h4M4 10.500h7" color="#7a7f86" /></ViewButton>
          <ViewButton aria-label="Draft"><Lines d="M1 1.500h10M1 3.500h10M1 5.500h10M1 7.500h10M1 9.500h10" /></ViewButton>
        </ViewButtons>
        <ZoomValue htmlFor="zoom">75%</ZoomValue>
        <RoundButton aria-label="Zoom out"><Lines d="M0 3.500h8M0 4.500h8" w={8} h={8} /></RoundButton>
        <ZoomSlider id="zoom" type="range" defaultValue="36" />
        <RoundButton aria-label="Zoom in"><Lines d="M0 3.500h8M0 4.500h8M3.500 0v8M4.500 0v8" w={8} h={8} /></RoundButton>
      </StatusBar>
      <Taskbar>
        <TaskButton aria-label="Internet Explorer"><IEIcon /></TaskButton>
        <TaskButton aria-label="File Explorer" $open><FolderIcon /></TaskButton>
        <TaskButton aria-label="Puzzle"><PuzzleIcon /></TaskButton>
        <TaskButton aria-label="Webcam"><CameraIcon /></TaskButton>
        <TaskButton aria-label="Connect"><CastIcon /></TaskButton>
        <TaskButton aria-label="HP"><HpIcon /></TaskButton>
        <TaskButton aria-label="Firefox" $open><FirefoxIcon /></TaskButton>
        <TaskButton aria-label="Chrome"><ChromeIcon /></TaskButton>
        <TaskButton aria-label="Word" $active><WordIcon /></TaskButton>
        <TaskButton aria-label="Logos" $open><PortraitIcon /></TaskButton>
        <TaskButton aria-label="Spotify" $open><SpotifyIcon /></TaskButton>
        <Tray>
          <button aria-label="Support"><HelpBall size={30} /></button>
          <TrayToggle aria-label="Show hidden icons"><Caret up color="#fff" /></TrayToggle>
          <Icon w={16}><rect width="16" height="16" fill="#f0a94a" /><circle cx="7.500" cy="7.500" r="5.500" stroke="#7a4e14" /><path d="M2 7.500h11M7.500 2v11M4 3q-2 4 0 9M11 3q2 4 0 9" stroke="#7a4e14" /><circle cx="12" cy="12" r="4" fill="#1c9c37" /><path d="M10 12l1.500 1.500 2.500-3" stroke="#fff" strokeWidth="1.300" /></Icon>
          <Icon w={16}><path d="M2 1v3M5 1v3M1 4.500h5v3l-2.500 2V15M8.500 2.500h6v12h-6zM10 1h3" stroke="#fff" strokeWidth="1.400" /></Icon>
          <Icon w={16} h={14}><path d="M1 11h2v2H1zM4 9h2v4H4zM7 7h2v6H7z" fill="#fff" /><path d="M10 4h2v9h-2zM13 1h2v12h-2z" fill="#9eb2c3" /></Icon>
          <Icon w={16}><path d="M1 5.500h3l3-4v13l-3-4H1z" fill="#fff" /><path d="M9.500 5.500q2 2.500 0 5M11.500 4q3 4 0 8M13.500 3q3.500 5 0 10" stroke="#fff" /></Icon>
          <Icon w={16}><path d="M4.500 1L8 3.500 4.500 6 1 3.500zM11.500 1L15 3.500 11.500 6 8 3.500zM4.500 6L8 8.500 4.500 11 1 8.500zM11.500 6L15 8.500 11.500 11 8 8.500zM8 9l3.500 2.500L8 14l-3.500-2.500z" fill="#9ed2f7" /><circle cx="11.500" cy="11.500" r="4" fill="#2c9c3a" /><path d="M9.500 11.500L11 13l2.500-3" stroke="#fff" strokeWidth="1.300" /></Icon>
          <Clock>9:26 AM<br />5/17/2013</Clock>
        </Tray>
      </Taskbar>
    </Window>
  );
}
